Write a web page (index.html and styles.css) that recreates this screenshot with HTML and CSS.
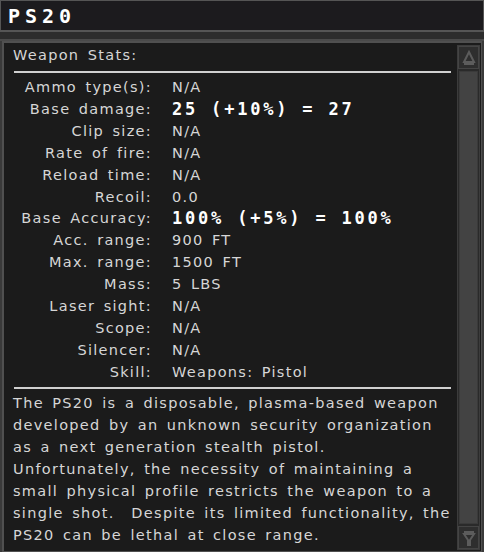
FILE: index.html
```html
<!DOCTYPE html>
<html lang="en">
<head>
    <meta charset="UTF-8">
    <title>PS20</title>
    <link rel="stylesheet" href="styles.css">
</head>
<body>
    <div class="titlebar"><span class="title">PS20</span></div>
    <div class="band"></div>

    <div class="panel">
        <div class="content">
            <div class="heading">Weapon Stats:</div>
            <div class="rule"></div>

            <div class="stats">
                <span class="label">Ammo type(s):</span><span class="value">N/A</span>
                <span class="label">Base damage:</span><span class="value big">25 (+10%) = 27</span>
                <span class="label">Clip size:</span><span class="value">N/A</span>
                <span class="label">Rate of fire:</span><span class="value">N/A</span>
                <span class="label">Reload time:</span><span class="value">N/A</span>
                <span class="label">Recoil:</span><span class="value">0.0</span>
                <span class="label">Base Accuracy:</span><span class="value big">100% (+5%) = 100%</span>
                <span class="label">Acc. range:</span><span class="value">900 FT</span>
                <span class="label">Max. range:</span><span class="value">1500 FT</span>
                <span class="label">Mass:</span><span class="value">5 LBS</span>
                <span class="label">Laser sight:</span><span class="value">N/A</span>
                <span class="label">Scope:</span><span class="value">N/A</span>
                <span class="label">Silencer:</span><span class="value">N/A</span>
                <span class="label">Skill:</span><span class="value">Weapons: Pistol</span>
            </div>

            <div class="rule second"></div>

            <p class="desc">The PS20 is a disposable, plasma-based weapon<br>developed by an unknown security organization<br>as a next generation stealth pistol.<br>Unfortunately, the necessity of maintaining a<br>small physical profile restricts the weapon to a<br>single shot.&nbsp; Despite its limited functionality, the<br>PS20 can be lethal at close range.</p>
        </div>

        <div class="scrollbar">
            <div class="arrow">
                <svg width="14" height="16" viewBox="0 0 14 16">
                    <path d="M7 2 L12 12 L2 12 Z" fill="none" stroke="#5c5c5c" stroke-width="2"/>
                    <rect x="2" y="12" width="10" height="3" fill="#5c5c5c"/>
                </svg>
            </div>
            <div class="track"><div class="thumb"></div></div>
            <div class="arrow">
                <svg width="14" height="16" viewBox="0 0 14 16">
                    <rect x="2" y="1" width="10" height="3" fill="#5c5c5c"/>
                    <path d="M2 4 L12 4 L8 10 L8 15 L6 15 L6 10 Z" fill="none" stroke="#5c5c5c" stroke-width="2"/>
                </svg>
            </div>
        </div>
    </div>
</body>
</html>
```

FILE: styles.css
```css
body {
    margin: 0;
    padding: 0;
    background-color: #3a3a3a;
    font-family: "DejaVu Sans", "Liberation Sans", sans-serif;
    color: #d6d6d6;
    width: 484px;
    height: 552px;
    overflow: hidden;
}

.titlebar {
    height: 29px;
    background-color: #1c1b1e;
    border: 1px solid #555;
    border-bottom-width: 2px;
    display: flex;
    align-items: center;
    padding-left: 7px;
}

.title {
    font-family: "DejaVu Sans Mono", monospace;
    font-size: 20px;
    font-weight: bold;
    letter-spacing: 5px;
    color: #fff;
}

.band {
    height: 7px;
    background-color: #2c2c2c;
    border-bottom: 2px solid #4a4a4a;
}

.panel {
    display: flex;
    margin: 0 2px;
    height: 508px;
    background-color: #1b1b1b;
    border: 2px solid #505050;
    border-right-width: 1px;
}

.content {
    flex: 1;
    min-width: 0;
    overflow: hidden;
    padding: 1px 4px 0 9px;
    font-size: 14.5px;
    letter-spacing: 1.3px;
    word-spacing: 2.5px;
}

.heading {
    line-height: 22px;
}

.rule {
    height: 2px;
    background-color: #d0d0d0;
    margin: 5px 2px 4px 1px;
}

.rule.second {
    margin-top: 3px;
    margin-bottom: 3px;
}

.stats {
    display: grid;
    grid-template-columns: 139px auto;
    column-gap: 20px;
    line-height: 21.9px;
}

.label {
    text-align: right;
}

.value.big {
    font-family: "DejaVu Sans Mono", monospace;
    font-weight: bold;
    font-size: 17px;
    letter-spacing: 2.8px;
    word-spacing: 0;
    color: #fff;
}

.desc {
    margin: 0;
    line-height: 22px;
    white-space: nowrap;
}

.scrollbar {
    width: 21px;
    margin: 2px 1px 1px 0;
    display: flex;
    flex-direction: column;
    border: 1px solid #3c3c3c;
    background-color: #2a2a2a;
}

.arrow {
    height: 21px;
    display: flex;
    align-items: center;
    justify-content: center;
    background-color: #2e2e2e;
    border: 1px solid #444;
}

.track {
    flex: 1;
    padding: 2px 1px;
    display: flex;
}

.thumb {
    flex: 1;
    background-color: #434343;
    border: 1px solid #3a3a3a;
}
```
